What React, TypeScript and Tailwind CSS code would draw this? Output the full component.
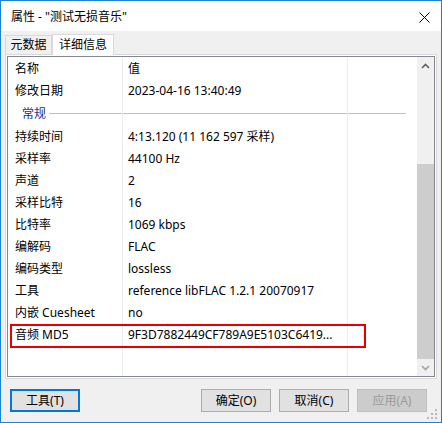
import React from 'react';

const rows = [
  { k: '持续时间', v: '4:13.120 (11 162 597 采样)' },
  { k: '采样率', v: '44100 Hz' },
  { k: '声道', v: '2' },
  { k: '采样比特', v: '16' },
  { k: '比特率', v: '1069 kbps' },
  { k: '编解码', v: 'FLAC' },
  { k: '编码类型', v: 'lossless' },
  { k: '工具', v: 'reference libFLAC 1.2.1 20070917' },
  { k: '内嵌 Cuesheet', v: 'no' },
];

const font = { fontFamily: '"Segoe UI", "Noto Sans", "Noto Sans CJK SC", sans-serif' };

function Row({ k, v, h = 'h-[22px]' }: { k: string; v: string; h?: string }) {
  return (
    <div className={`flex ${h} items-center`}>
      <div className="w-[115px] h-full border-r border-[#e9edf2] pl-[7px] flex items-center whitespace-nowrap">{k}</div>
      <div className="w-[225px] h-full border-r border-[#e9edf2] pl-[5px] flex items-center whitespace-nowrap">{v}</div>
      <div className="flex-1 h-full" />
    </div>
  );
}

export default function App() {
  return (
    <div className="w-[442px] h-[423px] border border-[#1883d7] bg-[#f0f0f0] flex flex-col text-[12px] text-black relative" style={font}>
      {/* Title bar */}
      <div className="h-[30px] bg-white flex items-center justify-between pl-[10px] pr-[11px] shrink-0">
        <span className="pt-[1px]">属性 - "测试无损音乐"</span>
        <svg width="11" height="11" viewBox="0 0 11 11" className="mt-[2px]">
          <path d="M0.5 0.5 L10.5 10.5 M10.5 0.5 L0.5 10.5" stroke="#000" strokeWidth="1" />
        </svg>
      </div>

      {/* Tabs */}
      <div className="flex items-end pl-[4px] pt-[2px] h-[23px] shrink-0">
        <div className="w-[47px] h-[19px] border border-b-0 border-[#d9d9d9] bg-[#f0f0f0] flex items-center justify-center">元数据</div>
        <div className="w-[62px] h-[21px] border border-b-0 border-[#d9d9d9] bg-white flex items-center justify-center relative z-10 -mb-px">详细信息</div>
      </div>

      {/* Panel */}
      <div className="ml-[4px] w-[432px] h-[325px] border border-[#d9d9d9] bg-white p-[1px] shrink-0">
        <div className="w-full h-full border border-[#828790] flex">
          <div className="flex-1 flex flex-col">
            <Row k="名称" v="值" h="h-[24px]" />
            <Row k="修改日期" v="2023-04-16 13:40:49" h="h-[20px]" />
            {/* group header */}
            <div className="flex h-[25px] items-center">
              <div className="w-[115px] h-full border-r border-[#e9edf2] pl-[14px] flex items-center">
                <span className="text-[#1e3287]">常规</span>
                <div className="flex-1 h-px bg-[#b9c1d6] ml-[3px]" />
              </div>
              <div className="w-[225px] h-full border-r border-[#e9edf2] flex items-center">
                <div className="w-full h-px bg-[#b9c1d6]" />
              </div>
              <div className="flex-1 h-full flex items-center">
                <div className="w-[58px] h-px bg-[#b9c1d6]" />
              </div>
            </div>
            {rows.map((r) => (
              <Row key={r.k} k={r.k} v={r.v} />
            ))}
            <div className="relative">
              <Row k="音频 MD5" v="9F3D7882449CF789A9E5103C6419..." />
              <div className="absolute left-[2px] top-0 w-[356px] h-[24px] border-2 border-[#e60000] pointer-events-none" />
            </div>
            <div className="flex flex-1">
              <div className="w-[115px] border-r border-[#e9edf2]" />
              <div className="w-[225px] border-r border-[#e9edf2]" />
            </div>
          </div>
          {/* Scrollbar */}
          <div className="w-[17px] bg-[#f0f0f0] flex flex-col">
            <div className="h-[17px] flex items-center justify-center">
              <svg width="9" height="6" viewBox="0 0 9 6">
                <path d="M1 5 L4.5 1.5 L8 5" fill="none" stroke="#606060" strokeWidth="1.6" />
              </svg>
            </div>
            <div className="h-[90px]" />
            <div className="flex-1 bg-[#cdcdcd]" />
            <div className="h-[17px] flex items-center justify-center">
              <svg width="9" height="6" viewBox="0 0 9 6">
                <path d="M1 1 L4.5 4.5 L8 1" fill="none" stroke="#a3a3a3" strokeWidth="1.6" />
              </svg>
            </div>
          </div>
        </div>
      </div>

      {/* Buttons */}
      <div className="flex items-center mt-[10px] pl-[9px] pr-[14px]">
        <button className="w-[70px] h-[23px] border-2 border-[#0078d7] bg-[#e1e1e1] flex items-center justify-center">工具(T)</button>
        <div className="ml-auto flex gap-[8px]">
          <button className="w-[70px] h-[23px] border border-[#adadad] bg-[#e1e1e1] flex items-center justify-center">确定(O)</button>
          <button className="w-[70px] h-[23px] border border-[#adadad] bg-[#e1e1e1] flex items-center justify-center">取消(C)</button>
          <button className="w-[70px] h-[23px] border border-[#bfbfbf] bg-[#cccccc] text-[#9a9a9a] flex items-center justify-center">应用(A)</button>
        </div>
      </div>

      {/* Size grip */}
      <svg width="11" height="11" viewBox="0 0 11 11" className="absolute right-[3px] bottom-[2px]">
        <rect x="8" y="0" width="2" height="2" fill="#b8b8b8" />
        <rect x="4" y="4" width="2" height="2" fill="#b8b8b8" />
        <rect x="8" y="4" width="2" height="2" fill="#b8b8b8" />
        <rect x="0" y="8" width="2" height="2" fill="#b8b8b8" />
        <rect x="4" y="8" width="2" height="2" fill="#b8b8b8" />
        <rect x="8" y="8" width="2" height="2" fill="#b8b8b8" />
      </svg>
    </div>
  );
}
